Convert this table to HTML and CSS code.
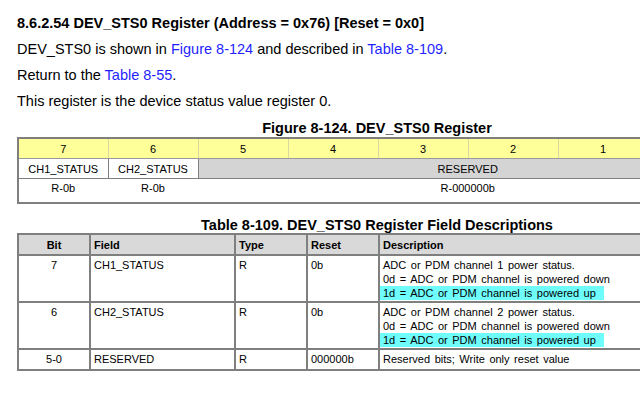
FILE: index.html
```html
<!DOCTYPE html>
<html>
<head>
<meta charset="utf-8">
<link rel="stylesheet" href="styles.css">
</head>
<body>
<div class="page">
  <h3 class="title">8.6.2.54 DEV_STS0 Register (Address = 0x76) [Reset = 0x0]</h3>
  <p class="para">DEV_STS0 is shown in <a class="link">Figure 8-124</a> and described in <a class="link">Table 8-109</a>.</p>
  <p class="para">Return to the <a class="link">Table 8-55</a>.</p>
  <p class="para">This register is the device status value register 0.</p>

  <div class="caption fig-cap">Figure 8-124. DEV_STS0 Register</div>
  <table class="reg">
    <colgroup><col class="bitcol"><col class="bitcol"><col class="bitcol"><col class="bitcol"><col class="bitcol"><col class="bitcol"><col class="bitcol"><col class="bitcol"></colgroup>
    <tr class="bits"><td>7</td><td>6</td><td>5</td><td>4</td><td>3</td><td>2</td><td>1</td><td>0</td></tr>
    <tr class="names"><td>CH1_STATUS</td><td>CH2_STATUS</td><td class="rsv" colspan="6">RESERVED</td></tr>
    <tr class="access"><td>R-0b</td><td>R-0b</td><td colspan="6">R-000000b</td></tr>
  </table>

  <div class="caption tbl-cap">Table 8-109. DEV_STS0 Register Field Descriptions</div>
  <table class="fields">
    <colgroup><col class="c-bit"><col class="c-field"><col class="c-type"><col class="c-reset"><col class="c-desc"></colgroup>
    <tr class="head"><th class="center">Bit</th><th>Field</th><th>Type</th><th>Reset</th><th>Description</th></tr>
    <tr class="tall"><td class="center">7</td><td>CH1_STATUS</td><td>R</td><td>0b</td><td>ADC or PDM channel 1 power status.<br>0d = ADC or PDM channel is powered down<br><span class="hl">1d = ADC or PDM channel is powered up</span></td></tr>
    <tr class="tall"><td class="center">6</td><td>CH2_STATUS</td><td>R</td><td>0b</td><td>ADC or PDM channel 2 power status.<br>0d = ADC or PDM channel is powered down<br><span class="hl">1d = ADC or PDM channel is powered up</span></td></tr>
    <tr class="short"><td class="center">5-0</td><td>RESERVED</td><td>R</td><td>000000b</td><td>Reserved bits; Write only reset value</td></tr>
  </table>
</div>
</body>
</html>
```

FILE: styles.css
```css
html, body {
  margin: 0;
  padding: 0;
  background: #ffffff;
  overflow: hidden;
}
body {
  font-family: "Liberation Sans", Arial, sans-serif;
  color: #000;
}
.page {
  width: 720px;
  padding: 13px 0 0 17px;
}
.title {
  font-size: 14.5px;
  font-weight: bold;
  line-height: 20px;
  margin: 0 0 6px 0;
}
.para {
  font-size: 14.5px;
  line-height: 20px;
  margin: 0 0 6px 0;
}
.link {
  color: #1f1fff;
  text-decoration: none;
}
.caption {
  font-size: 14.5px;
  font-weight: bold;
  text-align: center;
  line-height: 16px;
}
.fig-cap {
  margin-top: 9px;
  margin-bottom: 1px;
}
.tbl-cap {
  margin-top: 13px;
  margin-bottom: 0;
}
table {
  border-collapse: collapse;
  table-layout: fixed;
  width: 720px;
  font-size: 11px;
  word-spacing: 1.5px;
}
.bitcol { width: 90px; }
.reg {
  border: 2px solid #7f7f7f;
}
.reg td {
  text-align: center;
  padding: 0;
  border-left: 1px solid #8c8c8c;
  border-right: 1px solid #8c8c8c;
}
.reg .bits td {
  background: #ffff99;
  height: 19px;
  border-bottom: 1px solid #9a9a9a;
  border-left-color: #d8d8a0;
  border-right-color: #d8d8a0;
}
.reg .names td {
  height: 19px;
  border: 1px solid #7f7f7f;
}
.reg .names .rsv {
  background: #d4d4d4;
}
.reg .access td {
  height: 20px;
  vertical-align: top;
  padding-top: 3px;
  border-left-color: transparent;
  border-right-color: transparent;
}
.reg .access td:first-child { border-left: 2px solid #7f7f7f; }

.c-bit { width: 72px; }
.c-field { width: 145px; }
.c-type { width: 72px; }
.c-reset { width: 72px; }
.c-desc { width: 359px; }
.fields {
  border: 2px solid #7f7f7f;
}
.fields th, .fields td {
  border: 2px solid #7f7f7f;
  text-align: left;
  vertical-align: top;
  padding: 2px 3px 0 3px;
  line-height: 14px;
}
.fields th {
  background: #d9d9d9;
  font-weight: bold;
  font-size: 11px;
  height: 18px;
  vertical-align: middle;
  padding-top: 1px;
}
.fields .center { text-align: center; }
.fields .tall td { height: 43px; }
.fields .short td { height: 17px; }
.hl {
  background: #6ffcfc;
  padding: 1px 8px 1px 3px;
  margin-left: -3px;
}
```
